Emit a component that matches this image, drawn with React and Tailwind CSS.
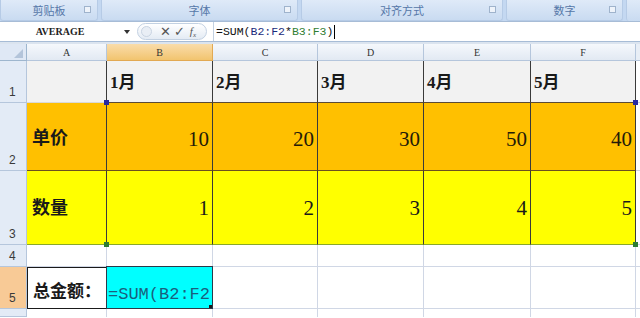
const serif = "font-['Liberation_Serif','Noto_Sans_CJK_SC',serif]";
const mono = "font-['Liberation_Mono','Noto_Sans_CJK_SC',monospace]";

function RibbonGroup({ label, className }) {
  return (
    <div className={`relative flex h-full items-center justify-center rounded-b-[3px] border border-t-0 border-[#b6cbe6] bg-gradient-to-b from-[#dfeaf8] to-[#c9dbf1] ${className}`}>
      <span className="text-[11px] text-[#5577a8] font-['Noto_Sans_CJK_SC',sans-serif]">{label}</span>
      <span className="absolute right-[6px] top-[6px] h-[7px] w-[7px] border border-[#9fb3cc] bg-[#eef3fa]" />
    </div>
  );
}

function Handle({ pos, color }) {
  return <span className={`absolute z-10 h-[5px] w-[5px] ${color} ${pos}`} />;
}

export default function App() {
  const months = ['1月', '2月', '3月', '4月', '5月'];
  const prices = [10, 20, 30, 50, 40];
  const counts = [1, 2, 3, 4, 5];
  const cols = ['A', 'B', 'C', 'D', 'E', 'F'];

  const rowHead = 'flex items-end pl-[9px] pb-[1px] text-[12px] text-[#3a3a3a] border-r border-b border-[#b5c6dc] bg-[#e3ebf6] font-["Liberation_Sans",sans-serif]';

  return (
    <div className="h-[318px] w-[640px] overflow-hidden bg-white">
      {/* ribbon group labels */}
      <div className="flex h-[21px] gap-[3px] bg-[#c4d8f1]">
        <RibbonGroup label="剪贴板" className="w-[98px]" />
        <RibbonGroup label="字体" className="w-[197px]" />
        <RibbonGroup label="对齐方式" className="w-[202px]" />
        <RibbonGroup label="数字" className="w-[117px]" />
        <div className="h-full flex-1 rounded-bl-[3px] border-l border-[#b6cbe6] bg-gradient-to-b from-[#dfeaf8] to-[#c9dbf1]" />
      </div>

      {/* formula bar */}
      <div className="flex h-[21px] items-center border-y border-[#a7bcd6] bg-white">
        <div className={`flex w-[120px] items-center justify-center text-[10px] font-bold text-[#222] ${serif}`}>AVERAGE</div>
        <span className="ml-[4px] h-0 w-0 border-x-[3px] border-t-[4px] border-x-transparent border-t-[#333]" />
        <div className="ml-[7px] flex h-[17px] w-[70px] items-center rounded-full border border-[#c3d1e2] bg-gradient-to-b from-white to-[#e4ebf4]">
          <span className="ml-[3px] h-[11px] w-[11px] rounded-full border border-[#c9d4e2] bg-[#e9eef5]" />
          <span className="ml-[8px] text-[13px] font-bold leading-none text-[#555] font-['DejaVu_Sans',sans-serif]">✕</span>
          <span className="ml-[3px] text-[13px] font-bold leading-none text-[#555] font-['DejaVu_Sans',sans-serif]">✓</span>
          <span className={`ml-[5px] text-[11px] italic text-[#555] ${serif}`}>f<sub className="text-[7px]">x</sub></span>
        </div>
        <div className={`ml-[6px] flex h-full items-center border-l border-[#c3d1e2] pl-[2px] text-[11.5px] text-[#111] ${mono}`}>
          <span>=SUM(</span>
          <span className="text-[#1a2a7a]">B2:F2</span>
          <span>*</span>
          <span className="text-[#2f7d32]">B3:F3</span>
          <span>)</span>
          <span className="ml-[1px] h-[14px] w-px bg-black" />
        </div>
      </div>

      <div className="h-[2px] bg-[#dbe4ef]" />

      {/* sheet */}
      <div className="grid grid-cols-[27px_80px_106px_105px_106px_107px_105px_4px] grid-rows-[17px_42px_68px_74px_22px_42px_8px]">
        {/* column headers */}
        <div className="flex items-end justify-end border-r border-b border-[#9eb6ce] bg-[#dfe8f5] pb-[2px] pr-[3px]">
          <span className="h-0 w-0 border-b-[9px] border-l-[9px] border-b-[#b3c4da] border-l-transparent" />
        </div>
        {cols.map((c) => (
          <div
            key={c}
            className={`flex items-center justify-center border-r border-b text-[10px] text-[#333] ${serif} ${
              c === 'B'
                ? 'border-[#e2a953] bg-gradient-to-b from-[#f9dcaa] to-[#f2c46e]'
                : 'border-[#b5c6dc] bg-gradient-to-b from-[#f5f8fc] to-[#e2e9f3]'
            }`}
          >
            {c}
          </div>
        ))}
        <div className="border-b border-[#b5c6dc] bg-[#e8eef6]" />

        {/* row 1 */}
        <div className={rowHead}>1</div>
        <div className="border-r border-b border-r-[#3a3a3a] border-b-[#d9d9d9] bg-[#f2f2f2]" />
        {months.map((m) => (
          <div key={m} className={`flex items-center border-r border-b border-r-[#3a3a3a] border-b-[#5b4a35] bg-[#f2f2f2] pl-[3px] pt-[2px] text-[17px] font-bold text-[#1a1a1a] ${serif}`}>
            {m}
          </div>
        ))}
        <div className="border-b border-[#d0d7e5]" />

        {/* row 2 */}
        <div className={rowHead}>2</div>
        <div className={`flex items-center border-r border-b border-r-[#3a3a3a] border-b-[#6b5020] bg-[#ffc000] pl-[5px] pt-[3px] text-[18px] font-bold text-[#1a1a1a] ${serif}`}>单价</div>
        {prices.map((p, i) => (
          <div key={i} className={`relative flex items-center justify-end border-r border-b border-r-[#3a3a3a] border-b-[#6b5020] bg-[#ffc000] pr-[3px] pt-[6px] text-[21px] text-[#241a08] ${serif}`}>
            {i === 0 && <Handle pos="-left-[3px] -top-[3px]" color="bg-[#2a2aa0]" />}
            {i === 4 && <Handle pos="-right-[3px] -top-[3px]" color="bg-[#2a2aa0]" />}
            {p}
          </div>
        ))}
        <div className="border-b border-[#d0d7e5]" />

        {/* row 3 */}
        <div className={rowHead}>3</div>
        <div className={`flex items-center border-r border-b border-r-[#3a3a3a] border-b-[#8aa82a] bg-[#ffff00] pl-[5px] pt-[2px] text-[18px] font-bold text-[#1a1a1a] ${serif}`}>数量</div>
        {counts.map((n, i) => (
          <div key={i} className={`relative flex items-center justify-end border-r border-b border-r-[#3a3a3a] border-b-[#8aa82a] bg-[#ffff00] pr-[3px] pt-[2px] text-[21px] text-[#1a1a1a] ${serif}`}>
            {i === 0 && <Handle pos="-left-[3px] -bottom-[3px]" color="bg-[#2e7d32]" />}
            {i === 4 && <Handle pos="-right-[3px] -bottom-[3px]" color="bg-[#2e7d32]" />}
            {n}
          </div>
        ))}
        <div className="border-b border-[#d0d7e5]" />

        {/* row 4 */}
        <div className={rowHead}>4</div>
        {cols.map((c) => (
          <div key={c} className="border-r border-b border-[#d0d7e5]" />
        ))}
        <div className="border-b border-[#d0d7e5]" />

        {/* row 5 */}
        <div className="flex items-end border-r border-b border-[#b5c6dc] bg-[#f8ca96] pb-[1px] pl-[9px] text-[12px] text-[#3a3a3a] font-['Liberation_Sans',sans-serif]">5</div>
        <div className={`flex items-center border border-[#1a1a1a] pl-[5px] pt-[8px] text-[17px] font-bold text-[#1a1a1a] ${serif}`}>总金额：</div>
        <div className={`relative -ml-px -mt-px flex items-end overflow-hidden whitespace-nowrap border border-[#2a3a4a] bg-[#00ffff] pb-[1px] pl-[1px] text-[17px] text-[#1a5f7e] ${mono}`}>
          =SUM(B2:F2
          <span className="absolute bottom-[-1px] right-[-1px] h-[4px] w-[4px] bg-[#1a1a1a]" />
        </div>
        {['C', 'D', 'E', 'F'].map((c) => (
          <div key={c} className="border-r border-b border-[#d0d7e5]" />
        ))}
        <div className="border-b border-[#d0d7e5]" />

        {/* row 6 */}
        <div className={rowHead}></div>
        {cols.map((c) => (
          <div key={c} className="border-r border-[#d0d7e5]" />
        ))}
        <div />
      </div>
    </div>
  );
}
